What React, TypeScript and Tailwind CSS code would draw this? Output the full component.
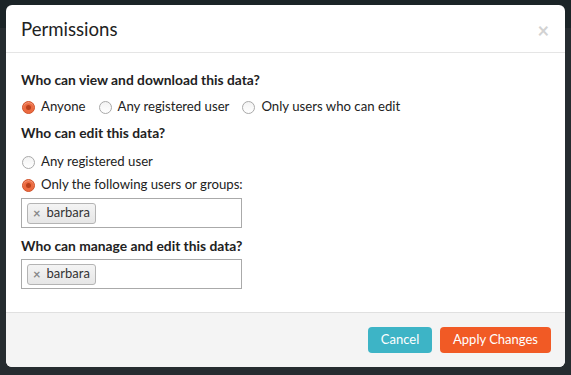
import React from "react";

function Radio({ checked }: { checked?: boolean }) {
  if (checked) {
    return (
      <span className="flex h-[13px] w-[13px] shrink-0 items-center justify-center rounded-full border border-[#d0532b] bg-[#ec6a40] shadow-[inset_0_1px_1px_rgba(255,255,255,0.35)]">
        <span className="h-[5px] w-[5px] rounded-full bg-[#b8401c]" />
      </span>
    );
  }
  return (
    <span className="h-[13px] w-[13px] shrink-0 rounded-full border border-[#a9a9a9] bg-gradient-to-b from-[#f3f3f3] to-white" />
  );
}

function Option({ label, checked }: { label: string; checked?: boolean }) {
  return (
    <label className="flex h-[20px] items-center gap-[6px] text-[13.2px]">
      <Radio checked={checked} />
      <span>{label}</span>
    </label>
  );
}

function TagBox() {
  return (
    <div className="flex h-[30px] w-[221px] items-center border border-[#aaaaaa] bg-white px-[5px]">
      <span className="flex h-[21px] items-center gap-[6px] rounded-[3px] border border-[#b4b4b4] bg-gradient-to-b from-[#f4f4f4] to-[#e6e6e6] pl-[5px] pr-[5px] text-[13px] text-[#333]">
        <span className="text-[13px] font-bold leading-none text-[#888]">×</span>
        <span>barbara</span>
      </span>
    </div>
  );
}

export default function App() {
  return (
    <div
      className="relative h-[375px] w-[571px] overflow-hidden bg-[#262c30]"
      style={{ fontFamily: "Lato, 'Open Sans', sans-serif" }}
    >
      <div className="absolute left-0 top-0 h-[28px] w-full bg-[#1b2427]" />
      <div className="absolute left-[6px] top-[5px] flex h-[362px] w-[559px] flex-col overflow-hidden rounded-[6px] bg-white text-[14px] text-[#222]">
        <div className="flex h-[48px] items-center justify-between border-b border-[#e5e5e5] pl-[15px] pr-[16px] pt-[2px]">
          <h1 className="text-[18.6px] font-normal text-[#222]">Permissions</h1>
          <span className="text-[20px] font-bold leading-none text-[#d2d2d2]">×</span>
        </div>
        <div className="flex flex-1 flex-col px-[15px] pt-[17px]">
          <div className="h-[20px] text-[13.8px] font-bold leading-[20px]">Who can view and download this data?</div>
          <div className="mt-[7px] flex items-center gap-[13px] pl-[1px]">
            <Option label="Anyone" checked />
            <Option label="Any registered user" />
            <Option label="Only users who can edit" />
          </div>
          <div className="mt-[6px] h-[20px] text-[13.8px] font-bold leading-[20px]">Who can edit this data?</div>
          <div className="mt-[9px] pl-[1px]">
            <Option label="Any registered user" />
          </div>
          <div className="mt-[3px] pl-[1px]">
            <Option label="Only the following users or groups:" checked />
          </div>
          <div className="mt-[3px]">
            <TagBox />
          </div>
          <div className="mt-[8px] h-[20px] text-[13.8px] font-bold leading-[20px]">Who can manage and edit this data?</div>
          <div className="mt-[3px]">
            <TagBox />
          </div>
        </div>
        <div className="flex h-[55px] items-center justify-end gap-[8px] border-t border-[#e0e0e0] bg-[#f4f4f4] pr-[14px]">
          <button className="h-[26px] w-[64px] rounded-[4px] bg-[#3db4c6] text-[13px] text-white">Cancel</button>
          <button className="h-[26px] w-[111px] rounded-[4px] bg-[#f15a25] text-[13px] text-white">Apply Changes</button>
        </div>
      </div>
    </div>
  );
}
